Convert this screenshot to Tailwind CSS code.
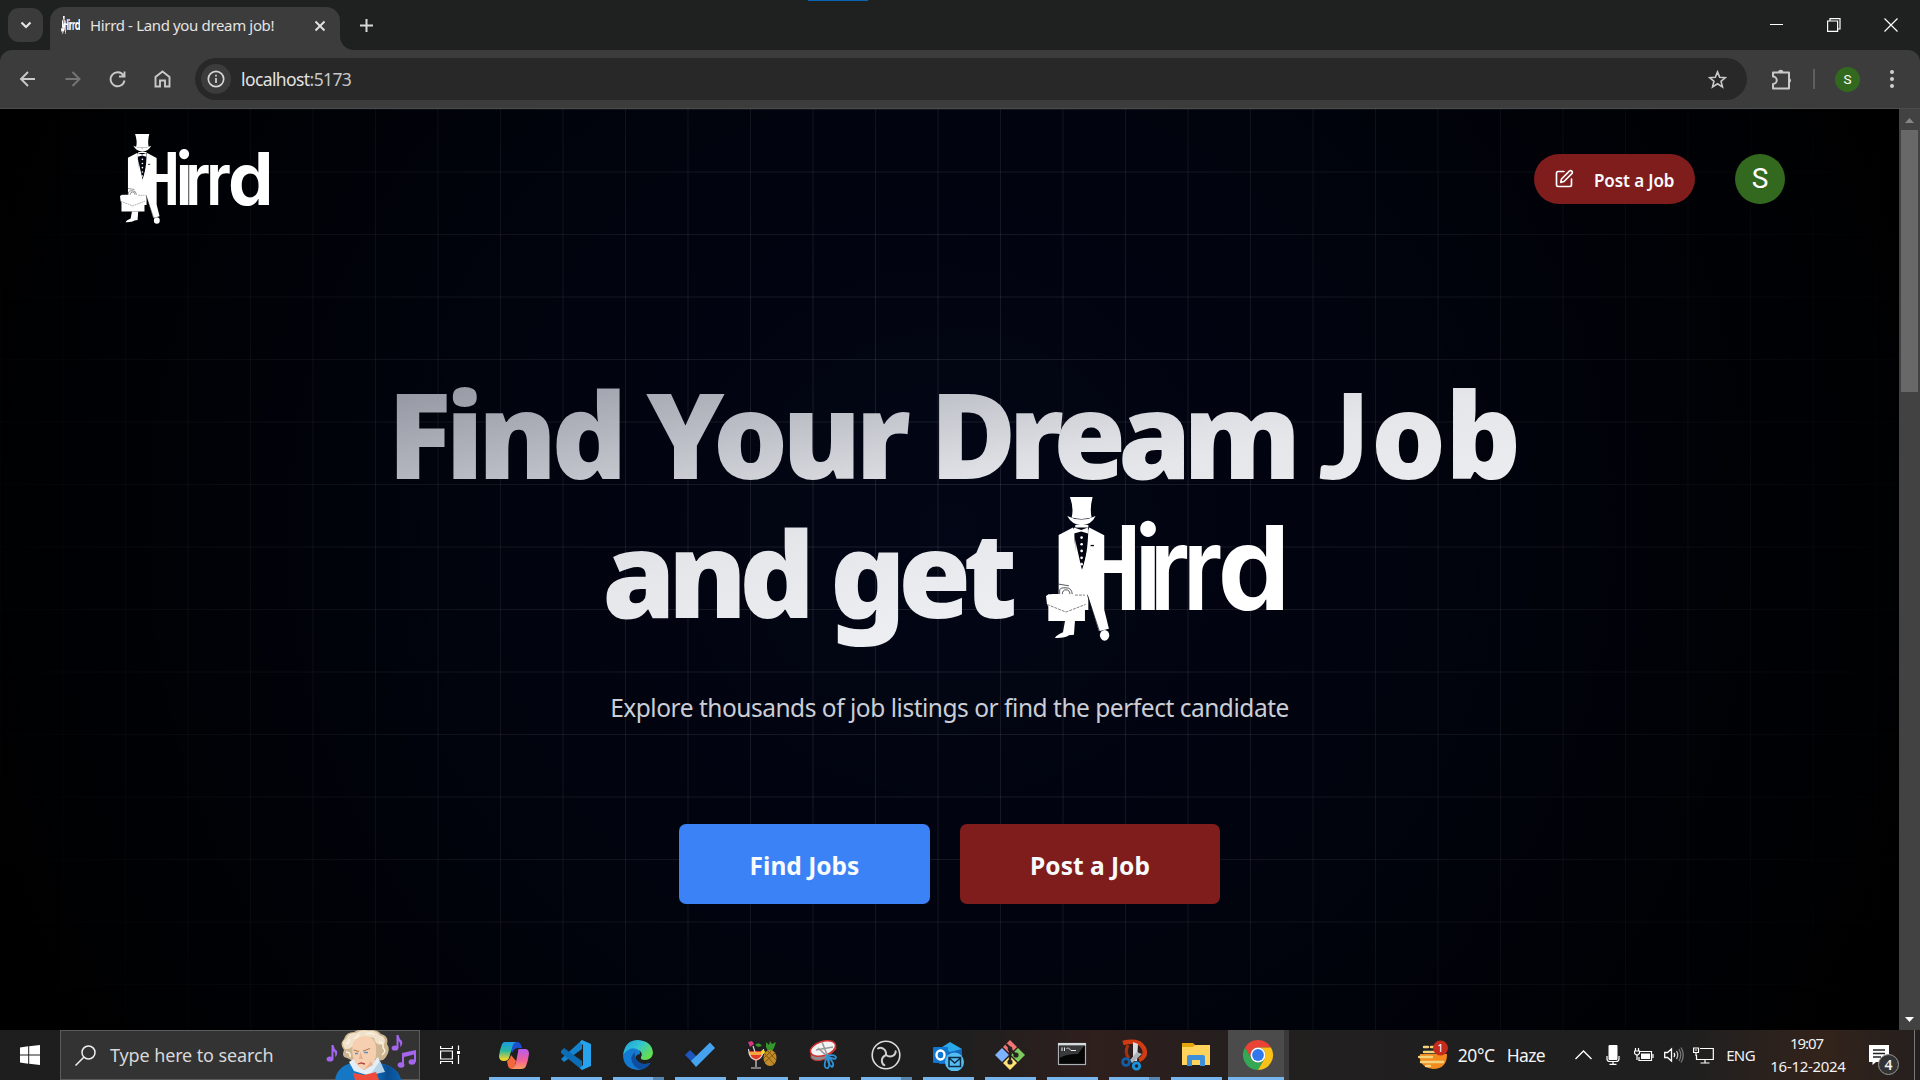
<!DOCTYPE html>
<html lang="en">
<head>
<meta charset="utf-8">
<title>Hirrd - Land you dream job!</title>
<script src="https://cdn.jsdelivr.net/npm/@tailwindcss/browser@4"></script>
</head>
<body class="flex h-[1080px] w-[1920px] flex-col overflow-hidden bg-black font-['Noto_Sans','Open_Sans',sans-serif] text-white">

<!-- Shared logo artwork -->
<svg class="hidden">
  <defs>
    <clipPath id="hclip"><rect x="215" y="100" width="200" height="320"/></clipPath>
    <symbol id="logo" viewBox="81 51 712 433" preserveAspectRatio="none">
      <g fill="#fff" font-family="Inter, sans-serif" font-weight="600" font-size="352">
        <g clip-path="url(#hclip)"><text transform="translate(147 391) scale(.85 1)">H</text></g>
        <text transform="translate(346 391) scale(.9 1)">i</text>
        <text transform="translate(392 391) scale(.85 1)">r</text>
        <text transform="translate(492 391) scale(.85 1)">r</text>
        <text transform="translate(597 391) scale(.98 1)" font-weight="700">d</text>
      </g>
      <path fill="#02050f" d="M160 143H212L208 200L190 275Z"/>
      <g fill="#fff">
        <path d="M153 51H221Q212 85 218 113Q187 122 158 113Q165 85 153 51Z"/>
        <path d="M145 108Q187 130 230 108Q218 134 188 136Q158 134 145 108Z"/>
        <path d="M165 143L187 150L207 143V161L187 155L165 161Z"/>
        <path d="M162 143L166 150C166 200 174 250 188 268V345H119V165Z"/>
        <path d="M211 143L256 166V390L270 447L240 455L189 290V270C201 240 207 200 208 150Z"/>
        <circle cx="188" cy="173" r="4"/><circle cx="188" cy="193" r="4"/><circle cx="188" cy="213" r="4"/><circle cx="188" cy="234" r="4"/><circle cx="188" cy="253" r="4"/>
        <path d="M138 424H168L165 465L150 467Q138 476 108 475Q111 467 132 458Z"/>
        <ellipse cx="257" cy="467" rx="14" ry="16"/>
        <path d="M81 349L90 343H201V374L198 380V424H88V380L84 374Z"/>
      </g>
      <g fill="none" stroke="#02050f">
        <path stroke-width="2" d="M119 313L150 318M122 343V330Q125 323 141 324Q158 324 160 343"/>
        <path stroke-width="2" d="M130 343Q131 330 141 330Q152 330 153 343"/>
        <path stroke-width="1.500" stroke-dasharray="9 3" d="M84 374L141 397L200 374M92 344L102 340M168 346H198"/>
        <path stroke-width="2" d="M205 345L242 456"/>
        <path stroke-width="4" d="M215 197H225"/>
      </g>
    </symbol>
  </defs>
</svg>

<!-- Tab strip -->
<header class="relative flex h-[50px] shrink-0 items-end bg-[#1f2121]">
  <div class="absolute top-0 left-[808px] h-px w-[60px] bg-[#0a64b4]"></div>
  <div class="flex h-[50px] w-[50px] items-center pl-2">
    <div class="flex h-[34px] w-[35px] items-center justify-center rounded-[11px] bg-[#3b3b3b]">
      <svg class="size-3" viewBox="0 0 12 12" fill="none" stroke="#e3e3e3" stroke-width="2.2"><path d="M1.5 3.5L6 8L10.500 3.500"/></svg>
    </div>
  </div>
  <div class="flex h-[43px] w-[290px] items-center rounded-t-[14px] bg-[#3c3c3c] pr-3.5 pb-[7px] pl-[11px]">
    <svg class="h-[18px] w-[19px]"><use href="#logo" width="19" height="18"/></svg>
    <span class="ml-2.5 text-[15px] tracking-[-0.35px] whitespace-nowrap text-[#e3e3e3]">Hirrd - Land you dream job!</span>
    <svg class="mt-px ml-auto size-[12px]" viewBox="0 0 12 12" stroke="#e3e3e3" stroke-width="1.900"><path d="M1.500 1.500L10.500 10.500M10.500 1.500L1.500 10.500"/></svg>
  </div>
  <svg class="size-[14px] shrink-0" viewBox="0 0 14 14" fill="#3c3c3c"><path d="M0 0V14H14A14 14 0 0 1 0 0Z"/></svg>
  <div class="flex h-[50px] flex-1 items-center pl-[5px]">
    <svg class="size-[15px]" viewBox="0 0 15 15" stroke="#d8d8d8" stroke-width="2"><path d="M7.500 1V14M1 7.500H14"/></svg>
    <div class="ml-auto flex items-center gap-[43px] pr-[22px]">
      <svg class="size-[14px]" viewBox="0 0 14 14" stroke="#fff"><path d="M0 6.500H13"/></svg>
      <svg class="size-[14px]" viewBox="0 0 14 14" fill="none" stroke="#fff" stroke-width="1.200"><path d="M.6 3H10.600V13.400H.6ZM3 3V.6H13V11H10.600"/></svg>
      <svg class="size-[14px]" viewBox="0 0 14 14" stroke="#fff" stroke-width="1.200"><path d="M.5 .5L13.500 13.500M13.500 .5L.5 13.500"/></svg>
    </div>
  </div>
</header>

<!-- Toolbar -->
<div class="shrink-0 bg-[#1f2121]">
<nav class="flex h-[59px] items-center rounded-t-[12px] border-b border-[#4a4c4b] bg-[#3c3c3c] pl-[17px]">
  <div class="flex w-[178px] items-center gap-[25px]">
    <svg class="size-5" viewBox="0 0 20 20" fill="none" stroke="#c9c9c9" stroke-width="1.900"><path d="M18 10H4.500M11 3L4 10L11 17"/></svg>
    <svg class="size-5" viewBox="0 0 20 20" fill="none" stroke="#757575" stroke-width="1.900"><path d="M3.500 10H17M10.500 3L17.500 10L10.500 17"/></svg>
    <svg class="size-5" viewBox="0 0 20 20" fill="none" stroke="#c9c9c9" stroke-width="1.900"><path d="M16.500 6.500A7 7 0 1 0 17.500 11.500M17.500 2.500V7.500H12"/></svg>
    <svg class="size-5" viewBox="0 0 20 20" fill="none" stroke="#c9c9c9" stroke-width="1.900"><path d="M3.500 17.500V8L10.500 2.500L17.500 8V17.500H13V11.500H8V17.500Z"/></svg>
  </div>
  <div class="flex h-[42px] w-[1552px] items-center rounded-full bg-[#282828] pl-1.5 pr-5">
    <div class="flex size-[30px] items-center justify-center rounded-full bg-[#3c3c3c]">
      <svg class="size-[18px]" viewBox="0 0 18 18" fill="none" stroke="#d5d5d5" stroke-width="1.700"><circle cx="9" cy="9" r="7.700"/><path d="M9 8V13M9 4.800V6.600"/></svg>
    </div>
    <span class="ml-2.5 text-[17.500px] tracking-[-0.6px] text-[#e3e3e3]">localhost<span class="text-[#c7c7c7]">:5173</span></span>
    <svg class="ml-auto size-[19px]" viewBox="0 0 20 20" fill="none" stroke="#c9c9c9" stroke-width="1.700"><path d="M10 2L12.300 7.600L18.300 8L13.700 11.900L15.200 17.800L10 14.500L4.800 17.800L6.300 11.900L1.700 8L7.700 7.600Z"/></svg>
  </div>
  <svg class="ml-[24px] h-[21px] w-[22px]" viewBox="0 0 22 21" fill="none" stroke="#c9c9c9" stroke-width="2"><path d="M2 3.500H18V19.500H2V15A3.500 3.500 0 0 0 2 7.500Z" stroke-linejoin="round"/><path fill="#c9c9c9" stroke="none" d="M7 3A2.800 2.800 0 0 1 12.500 3ZM18.500 9A2.800 2.800 0 0 1 18.500 14Z"/></svg>
  <div class="ml-[20px] h-5 w-0.5 bg-[#5e5e5e]"></div>
  <div class="ml-5 flex size-[25px] items-center justify-center rounded-full bg-[#33691e] font-[Roboto] text-[13.500px]">S</div>
  <svg class="ml-[30px] h-5 w-1" viewBox="0 0 4 20" fill="#d0d0d0"><circle cx="2" cy="3" r="2"/><circle cx="2" cy="10" r="2"/><circle cx="2" cy="17" r="2"/></svg>
</nav>
</div>

<!-- Page -->
<div class="flex h-[921px] shrink-0">
  <main class="h-full w-[1899px] bg-[#020617] bg-[linear-gradient(to_right,rgba(255,255,255,0.115)_1.25px,transparent_1.25px),linear-gradient(to_bottom,rgba(255,255,255,0.115)_1.25px,transparent_1.25px)] bg-[size:62.5px_62.5px]">
    <div class="flex h-full w-full flex-col bg-[radial-gradient(ellipse_1020px_1000px_at_50%_46%,rgba(0,0,0,0.1)_0%,rgba(0,0,0,0.48)_55%,#000_100%)]">
      <div class="flex h-[140px] items-center pr-[114px] pl-[120px]">
        <svg class="-mt-px h-[90px] w-[149px]"><use href="#logo" width="149" height="90"/></svg>
        <button class="ml-auto flex h-[50px] w-[161px] items-center rounded-full bg-[#7f1d1d] pl-[20px]">
          <svg class="size-5" viewBox="0 0 24 24" fill="none" stroke="#f8fafc" stroke-width="2" stroke-linecap="round" stroke-linejoin="round"><path d="M12 3H5a2 2 0 0 0-2 2v14a2 2 0 0 0 2 2h14a2 2 0 0 0 2-2v-7"/><path d="M18.400 2.600a2.100 2.100 0 0 1 3 3L12 15l-4 1 1-4Z"/></svg>
          <span class="mt-[3px] ml-5 text-[17px] font-semibold tracking-[-0.1px] whitespace-nowrap text-[#f8fafc]">Post a Job</span>
        </button>
        <div class="ml-10 flex size-[50px] items-center justify-center rounded-full bg-[#33691e] font-[Roboto] text-[28px]">S</div>
      </div>

      <section class="flex flex-col items-center pt-[114px]">
        <div class="flex w-[1160px] flex-col items-center bg-[linear-gradient(168deg,#8a8d98_0%,#b0b3bc_21%,#dedfe4_44%,#e5e6ea_50%,#f7f8fa_100%)] bg-clip-text text-[118px] leading-[140px] font-black tracking-[-7.800px] whitespace-nowrap text-transparent">
          <div class="h-[140px] pl-[2px]"><span class="tracking-[-5.800px]">Find </span><span class="tracking-[-5.800px]">Your </span><span class="tracking-[-8.200px]">Dream </span><span class="pl-[3px] font-[Lato] text-[119px] tracking-[1px]">J</span><span class="tracking-[-1px]">o</span>b</div>
          <div class="flex h-[146px] items-start pr-[14px]">
            <span class="pr-[36px]">and get</span>
            <svg class="-mt-[6px] h-[144px] w-[237px]"><use href="#logo" width="237" height="144"/></svg>
          </div>
        </div>
        <p class="mt-[43px] text-[24.500px] leading-8 tracking-[-0.48px] text-[#cbced6]">Explore thousands of job listings or find the perfect candidate</p>
        <div class="mt-[100px] flex gap-[30px] text-[24.500px] font-bold text-[#f8fafc]">
          <button class="flex h-20 w-[251px] items-center justify-center rounded-[7px] bg-[#3b82f6] pt-1">Find Jobs</button>
          <button class="flex h-20 w-[260px] items-center justify-center rounded-[7px] bg-[#7f1d1d] pt-1">Post a Job</button>
        </div>
      </section>
    </div>
  </main>
  <aside class="flex w-[21px] flex-col items-center bg-[#424242]">
    <svg class="mt-[9px] h-[5px] w-[9px]" viewBox="0 0 9 5" fill="#868686"><path d="M4.500 0L9 5H0Z"/></svg>
    <div class="mt-[7px] h-[262px] w-[17px] bg-[#686868]"></div>
    <svg class="mt-auto mb-2 h-[5px] w-[9px]" viewBox="0 0 9 5" fill="#fff"><path d="M0 0H9L4.500 5Z"/></svg>
  </aside>
</div>

<!-- Taskbar -->
<footer class="flex h-[50px] shrink-0 bg-[linear-gradient(90deg,#1e1e1e_0%,#1f1f1f_50%,#2f1f1d_57%,#221f1f_66%,#1f1f1f_80%,#1f1f1f_88%,#33231b_95%,#241f1e_100%)]">
  <div class="flex w-[60px] items-center justify-center">
    <svg class="size-5" viewBox="0 0 20 20" fill="#fff"><path d="M0 2.500L8.200 1.300V9.500H0ZM9.200 1.200L20 0V9.500H9.200ZM0 10.500H8.200V18.700L0 17.500ZM9.200 10.500H20V20L9.200 18.800Z"/></svg>
  </div>
  <div class="flex w-[360px] items-center border border-[#5b5b5b] bg-[#333] pl-[14px]">
    <svg class="size-[21px]" viewBox="0 0 21 21" fill="none" stroke="#f0f0f0" stroke-width="1.500"><circle cx="13.500" cy="7.500" r="6.500"/><path d="M8.800 12.200L.5 20.500"/></svg>
    <span class="ml-[14px] text-[18px] tracking-[-0.12px] whitespace-nowrap text-[#d8d8d8]">Type here to search</span>
    <svg class="mr-px ml-auto h-[50px] w-[92px]" viewBox="0 0 92 50">
      <defs><linearGradient id="coat" x1="0" y1="0" x2="1" y2="0"><stop offset="0" stop-color="#1173c0"/><stop offset=".5" stop-color="#0a4c90"/><stop offset="1" stop-color="#0c62ae"/></linearGradient></defs>
      <path fill="#cdb591" d="M21 28Q15 27 18 20Q13 14 18 9Q20 2 28 2Q34-2 42 0Q51-1 55 4Q63 6 61 14Q65 20 60 27Q56 33 50 29L27 31Z"/>
      <path fill="#f0e2ca" d="M19 19Q14 12 20 9Q22 2 30 3Q36-1 43 1Q50 0 53 5Q61 7 58 14Q50 17 48 8Q36 5 29 12Q26 20 19 19Z"/>
      <path fill="none" stroke="#fbf3e2" stroke-width="1.500" d="M20 14Q24 13 23 9M28 8Q32 8 33 4M40 4Q46 2 48 5M53 12Q58 12 57 18Q61 21 56 25M20 22Q25 22 24 27"/>
      <path fill="#1677c4" d="M9 50Q11 37 25 33L54 33Q72 37 75 50Z"/><path fill="url(#coat)" d="M48 36L58 34Q72 38 75 50H52Z"/>
      <path fill="#e3eef6" d="M23 32L29 28L38 40L52 27L58 41L44 46L28 41Z"/>
      <path fill="#b6d3e8" d="M44 45L54 31L59 42Z"/>
      <path fill="#f6cfb0" d="M27 13Q30 6 40 6Q49 7 50 17Q51 28 47 34L38 40Q31 37 28 30Q25 21 27 13Z"/>
      <path fill="#e6b291" d="M34.500 22L33 29H37ZM45 31L38 40L47 35Z"/>
      <path stroke="#a87a58" stroke-width="1" fill="none" d="M27.500 20L33 21.500M37 21L44 18.500"/><path stroke="#5c8fc4" stroke-width="1.700" d="M29 23.500H32M38 22.500H42"/>
      <path stroke="#b5443c" stroke-width="1.300" fill="none" d="M32 34L35 33L39 34"/>
      <path fill="#ee4b3c" d="M27 43L38 45L50 42L53 50H29Z"/>
      <g fill="#a566ee"><ellipse cx="4" cy="29" rx="3.400" ry="2.600"/><path d="M5.500 15L7.500 15Q8 19 11 21Q12 25 9 27Q10 23 7.500 21V29H5.500Z"/><ellipse cx="69" cy="18" rx="3.400" ry="2.600"/><path d="M70.500 5H72.500Q73 9 76 11Q77 15 74 17Q75 13 72.500 11V18H70.500Z"/><ellipse cx="75" cy="35" rx="3.400" ry="2.800"/><ellipse cx="86" cy="32" rx="3.400" ry="2.800"/><path d="M76 23L90 20V32H88V24.500L78 27V35H76Z"/></g>
    </svg>
  </div>
  <div class="flex w-[68px] items-center pl-5">
    <svg class="size-5" viewBox="0 0 20 20" fill="none" stroke="#fff" stroke-width="1.200"><path d="M.6 1V3.500H12.400V1M.6 6H12.400V14H.6ZM.6 19V16.500H12.400V19M18.500 .5V5M18.500 10V19"/><path fill="#fff" stroke="none" d="M17 6H20V9H17Z"/></svg>
  </div>

  <div class="grid h-[50px] w-[801px] grid-flow-col grid-cols-[repeat(13,62px)] pl-px [&>div]:flex [&>div]:w-[51px] [&>div]:flex-col [&>div]:items-center [&>div]:pt-[9px] [&>div>svg]:-ml-px [&>div>svg]:size-8 [&>div>svg]:shrink-0 [&>div>i]:mt-auto [&>div>i]:h-[3px] [&>div>i]:w-[51px] [&>div>i]:shrink-0 [&>div>i]:bg-[#76b5ee]">
    <!-- Copilot -->
    <div><svg viewBox="0 0 32 32"><defs><linearGradient id="c1" x1="0" y1="0" x2="0" y2="1"><stop offset="0" stop-color="#1b9be8"/><stop offset=".45" stop-color="#29b6a0"/><stop offset=".9" stop-color="#e8d532"/></linearGradient><linearGradient id="c2" x1="0" y1="0" x2="0" y2="1"><stop offset="0" stop-color="#b45cf0"/><stop offset=".55" stop-color="#f0609c"/><stop offset="1" stop-color="#fb9a5b"/></linearGradient></defs>
      <path fill="#1b4fd0" d="M14 3H19Q22 3 23 6L24 9H20Q16 9 14 14L12 8Z"/><path fill="url(#c1)" d="M7 3H18Q15 4 14 9L11 19Q10 22 6 22Q1 22 1 17Q2 10 4 5Q5 3 7 3Z"/><path fill="#f2683c" d="M9 22Q12 21 13 16L18 22L16 30H14Q11 30 10 27Z"/><path fill="url(#c2)" d="M21 10H27Q31 10 31 15Q30 22 28 27Q27 30 23 30H14Q17 28 18 23L20 13Q20 10 21 10Z"/></svg><i></i></div>
    <!-- VS Code -->
    <div><svg viewBox="0 0 32 32"><path fill="#1584cf" d="M1 20L22 1V10L4 23Z"/><path fill="#0c6cb4" d="M1 12L4 9L22 22V31L1 14Z"/><path fill="#27a3ee" d="M22 1L31 5V27L22 31L20 29L23 26V6L20 3Z"/></svg><i></i></div>
    <!-- Edge -->
    <div><svg viewBox="0 0 32 32"><defs><linearGradient id="e1" x1="0" y1="0" x2="1" y2=".6"><stop offset="0" stop-color="#1c9ce0"/><stop offset=".5" stop-color="#30c4d2"/><stop offset="1" stop-color="#66e04d"/></linearGradient></defs>
      <path fill="#1479d0" d="M1 17Q2 7 11 8Q19 10 18 15Q12 16 14 21Q18 27 28 24Q23 31 16 31Q2 30 1 17Z"/><path fill="url(#e1)" d="M1 16Q3 1 16 1Q30 2 31 14Q30 21 23 21Q18 21 19 18Q21 15 18 12Q9 5 1 16Z"/><path fill="#0d4f9e" d="M13 13Q8 17 10 23Q13 30 19 30.500Q26 29 29 23.500Q22 27 17 23Q12 19 13 13Z"/></svg><i class="border-r-[11px] border-[#5686b0]"></i></div>
    <!-- To Do -->
    <div><svg viewBox="0 0 32 32"><path fill="#1d56bd" d="M1 16L6 11L17 22L12 27Z"/><path fill="#44a2ee" d="M7 22L26 3.500L31 9L12 28Z"/></svg><i></i></div>
    <!-- Cocktail -->
    <div><svg viewBox="0 0 32 32"><path fill="#35962c" d="M20 3L23 6L24 2L26 5L30 3L28 9L26 12H22L20 8ZM9 6Q13 2 16 7L12 8Z"/><ellipse cx="24" cy="19" rx="6.500" ry="8" fill="#c18c25"/><path stroke="#80551a" fill="none" d="M19 15L28 25M22 12L30 21M29 14L19 23M25 12L18 19"/><path fill="#e23a26" d="M3 12H17Q17 20 10 22Q3 20 3 12Z"/><path fill="#f4a63c" d="M3 13H17V16H3Z"/><path fill="#d43a83" d="M2 3L6 2L8 5L4 8Z"/><path stroke="#d9d9d9" fill="none" stroke-width="1.200" d="M2.500 10Q3 20 10 21Q17 20 17.500 10M10 21V28M5 29H15M7 7L9 13"/><circle cx="17" cy="13" r="2" fill="#f6db2c"/></svg><i></i></div>
    <!-- Snip -->
    <div><svg viewBox="0 0 32 32"><path fill="#8c8c8c" stroke="#c33535" d="M3 15L3 19Q8 24 17 20L28 10L27 6Z"/><ellipse cx="15" cy="9.500" rx="13" ry="7" fill="#f3f3f3" stroke="#cf3030" stroke-width="1.500" transform="rotate(-17 15 9.500)"/><path stroke="#999" stroke-width="1.600" fill="none" d="M14 3L20 18M8 11L25 8M10 9L20 18"/><path stroke="#2d91d3" stroke-width="1.800" fill="none" d="M19 17Q26 15 28 18Q28 22 19 17Q23 25 20 29Q14 30 19 17ZM19 17Q28 25 24 28Q20 26 19 17"/></svg><i></i></div>
    <!-- OBS -->
    <div><svg viewBox="0 0 32 32"><circle cx="16" cy="16" r="13.800" fill="#1c1c1c" stroke="#dcdcdc" stroke-width="1.600"/><g fill="none" stroke="#cfcfcf" stroke-width="2" stroke-linecap="round"><path d="M16 16Q16.500 11.500 13 9.500Q10 8 8 9.500"/><path d="M16 16Q16.500 11.500 13 9.500Q10 8 8 9.500" transform="rotate(120 16 16)"/><path d="M16 16Q16.500 11.500 13 9.500Q10 8 8 9.500" transform="rotate(240 16 16)"/></g></svg><i class="border-r-[11px] border-[#5686b0]"></i></div>
    <!-- Outlook -->
    <div><svg viewBox="0 0 32 32"><path fill="#2ba8ea" d="M7 10L18 3L30 10V24H7Z"/><path fill="#1368bd" d="M7 8L18 13L30 10V25H7Z"/><rect x="1" y="8" width="15" height="16" rx="1" fill="#0f76d1"/><ellipse cx="8.500" cy="16" rx="4" ry="4.500" fill="none" stroke="#fff" stroke-width="2.400"/><circle cx="22.500" cy="23" r="9.500" fill="#55bdf1"/><path fill="none" stroke="#0c2b44" stroke-width="1.500" d="M17 18.500H28.500V27.500H17ZM17 19L22.700 24L28.500 19"/></svg><i></i></div>
    <!-- Git -->
    <div><svg viewBox="0 0 32 32"><path fill="#f27575" d="M16 1L23 8L16 15L9 8Z"/><path fill="#80b3ff" d="M8 9L15 16L8 23L1 16Z"/><path fill="#7ccb5c" d="M24 9L31 16L24 23L17 16Z"/><path fill="#ffe175" d="M16 17L23 24L16 31L9 24Z"/><path fill="none" stroke="#26221f" stroke-width="2.400" d="M12 5L16 9V23M16 10L22 16"/><circle cx="16" cy="10" r="2.400" fill="#26221f"/><circle cx="16" cy="23" r="2.600" fill="#26221f"/><circle cx="22" cy="16" r="2.600" fill="#26221f"/></svg><i></i></div>
    <!-- Terminal -->
    <div><svg viewBox="0 0 32 32"><rect x="2.500" y="4.500" width="27" height="21" fill="#050505" stroke="#a8b0b4" stroke-width="1.200"/><path fill="#d5dadd" d="M2 4H30V6.500H2Z"/><path fill="#39393b" d="M3.500 7H28L22 15Q10 15 3.500 19Z"/><path stroke="#e8e8e8" fill="none" d="M6 8.500V12M8.500 8.500V12M11 9V10M12 8.500L15 11.500H20"/></svg><i></i></div>
    <!-- Snipping tool -->
    <div><svg viewBox="0 0 32 32"><path fill="none" stroke="#d13b12" stroke-width="4.500" d="M5 4Q14 1.500 21 4Q29 10 26 17Q24 20 21 21"/><path fill="none" stroke="#a8300f" stroke-width="3" d="M11 19Q6 14 10 6"/><path fill="#d9dce0" d="M15 3L20 5L19 22H15Z"/><path fill="#aab2ba" d="M24 15L14 24L12 21L19 13Z"/><circle cx="8" cy="23" r="3.400" fill="none" stroke="#125da8" stroke-width="2.800"/><circle cx="18.500" cy="27" r="3.200" fill="none" stroke="#1893df" stroke-width="2.800"/></svg><i class="border-r-[11px] border-[#5686b0]"></i></div>
    <!-- Explorer -->
    <div><svg viewBox="0 0 32 32"><path fill="#e5a50f" d="M2 4H13L16 7V10H2Z"/><path fill="#ffd35c" d="M2 8H13L15 6H30V26H2Z"/><path fill="#3d8fd9" d="M7 27V18Q7 16 9 16H23Q25 16 25 18V27H20V21H12V27Z"/></svg><i></i></div>
    <!-- Chrome -->
    <div class="-ml-[5px] !w-[61px] border-r-[5px] border-[#3a3a3a] bg-[#4b4b4b]"><svg class="!ml-[3px]" viewBox="0 0 32 32"><path fill="#ea4335" d="M3 8.500A15 15 0 0 1 29 8.500H16A7.500 7.500 0 0 0 9.500 19.700Z"/><path fill="#34a853" d="M3 8.500A15 15 0 0 0 16 31L22.500 19.700A7.500 7.500 0 0 1 9.500 19.700Z"/><path fill="#fbc116" d="M29 8.500A15 15 0 0 1 16 31L22.500 19.700A7.500 7.500 0 0 0 16 8.500Z"/><circle cx="16" cy="16" r="7.500" fill="#fff"/><circle cx="16" cy="16" r="5.900" fill="#3078ec"/></svg><i class="!w-[56px]"></i></div>
  </div>

  <div class="ml-auto flex items-center whitespace-nowrap text-[#f2f2f2]">
    <svg class="h-[30px] w-[31px]" viewBox="0 0 31 30"><path fill="#f28a1e" d="M2 14H29Q29 29 15 29Q5 28 2 20Z"/><path stroke="#f2d37d" stroke-width="2.400" stroke-linecap="round" d="M6 7H10M13 7H17M6 12H22M1 17H14M3 22H25M8 26H12"/><circle cx="22.500" cy="8" r="7.500" fill="#c42b1c"/><text x="22.500" y="12" font-size="11" fill="#fff" text-anchor="middle">1</text></svg>
    <span class="ml-[9px] text-[17.500px] tracking-[-0.4px]">20°C</span><span class="ml-[12px] text-[17.500px] tracking-[-0.6px]">Haze</span>
    <svg class="ml-[30px] h-[10px] w-[17px]" viewBox="0 0 17 10" fill="none" stroke="#fff" stroke-width="1.400"><path d="M.5 9L8.500 1L16.500 9"/></svg>
    <svg class="ml-[14px] h-5 w-[14px]" viewBox="0 0 14 20" fill="#fff"><rect x="2.500" width="9" height="15" rx="1"/><path d="M1 11V14Q1 16.500 4 16.500H10Q13 16.500 13 14V11M7 16V19M3.500 19.300H10.500" fill="none" stroke="#fff" stroke-width="1.200"/></svg>
    <svg class="ml-[14px] h-[14px] w-5" viewBox="0 0 20 14" fill="none" stroke="#fff" stroke-width="1.200"><path d="M5 3.500H17.500V12.500H5V9M19 6V10M1.500 0V3M4.500 0V3M.5 3H5.500V5.500L3 7.500L.5 5.500ZM3 7V12"/><path fill="#fff" stroke="none" d="M7 5.500H16V11H7Z"/></svg>
    <svg class="ml-[10px] h-[18px] w-5" viewBox="0 0 20 18" fill="none" stroke="#fff" stroke-width="1.300"><path d="M.7 6.500H3.500L7.500 3V15L3.500 11.500H.7ZM10 7Q11.500 9 10 11"/><path stroke="#c0c0c0" d="M12.500 5Q15 9 12.500 13"/><path stroke="#777" d="M15 3Q18.500 9 15 15M17 1.500Q21.500 9 17 16.500"/></svg>
    <svg class="ml-[9px] h-[17px] w-[21px]" viewBox="0 0 21 17" fill="none" stroke="#fff" stroke-width="1.200"><path d="M7 1.500H20.300V12.500H3.500V8M12 12.500V15.500M7.500 16H16.500M.6 1H5.500V5.500H.6ZM3 6V9M2 3H4"/></svg>
    <span class="ml-[12px] text-[15px] tracking-[-0.6px]">ENG</span>
    <div class="ml-[15px] flex w-[76px] flex-col items-center text-[15px] leading-[23px]"><span class="-ml-[3px] tracking-[-1.1px]">19:07</span><span class="tracking-[-0.3px]">16-12-2024</span></div>
    <div class="relative ml-[23px] h-[50px] w-[34px]">
      <svg class="mt-[14px] h-[21px] w-5" viewBox="0 0 20 21"><path fill="#fff" d="M0 1H20V18H7L3.500 21V18H0Z"/><path stroke="#222" stroke-width="1.300" d="M4 6H16M4 9.500H16M4 13H12"/></svg>
      <span class="absolute top-[24px] left-[9px] flex size-[21px] items-center justify-center rounded-full border border-[#999] bg-[#333] text-[14px] font-semibold">4</span>
    </div>
    <div class="ml-[11px] h-[50px] w-px bg-[#777]"></div><div class="w-[5px]"></div>
  </div>
</footer>
</body>
</html>
